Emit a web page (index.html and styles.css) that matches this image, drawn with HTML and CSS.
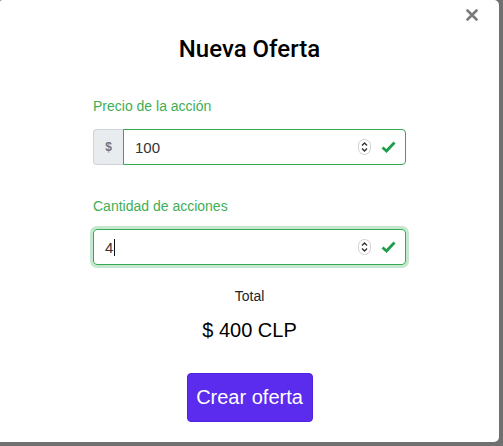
FILE: index.html
```html
<!DOCTYPE html>
<html lang="es">
<head>
  <meta charset="UTF-8">
  <title>Nueva Oferta</title>
  <link rel="stylesheet" href="styles.css">
</head>
<body>

  <div class="modal">
    <button class="close-btn" aria-label="Cerrar">
      <svg width="12" height="12" viewBox="0 0 12 12">
        <path d="M1.5 1.5 L10.5 10.5 M10.5 1.5 L1.5 10.5" stroke="#7b7b7b" stroke-width="2.6" stroke-linecap="round"/>
      </svg>
    </button>

    <h4 class="modal-title">Nueva Oferta</h4>

    <form class="offer-form">
      <div class="field">
        <label class="valid-label">Precio de la acción</label>
        <div class="input-group">
          <span class="addon">$</span>
          <div class="input-box">
            <span class="value">100</span>
            <svg class="spinner" width="13" height="16" viewBox="0 0 13 16">
              <rect x="0.5" y="0.5" width="12" height="15" rx="6" fill="#fff" stroke="#d0d0d0"/>
              <path d="M4 6.4 L6.5 3.9 L9 6.4 M4 9.6 L6.5 12.1 L9 9.6" fill="none" stroke="#333" stroke-width="1.4"/>
            </svg>
            <svg class="check" width="15" height="12" viewBox="0 0 15 12">
              <path d="M1.5 6.5 L5.5 10 L13.5 1.5" fill="none" stroke="#1e9e4a" stroke-width="2.8"/>
            </svg>
          </div>
        </div>
      </div>

      <div class="field">
        <label class="valid-label">Cantidad de acciones</label>
        <div class="input-box focused">
          <span class="value">4</span><span class="caret"></span>
          <svg class="spinner" width="13" height="16" viewBox="0 0 13 16">
            <rect x="0.5" y="0.5" width="12" height="15" rx="6" fill="#fff" stroke="#d0d0d0"/>
            <path d="M4 6.4 L6.5 3.9 L9 6.4 M4 9.6 L6.5 12.1 L9 9.6" fill="none" stroke="#333" stroke-width="1.4"/>
          </svg>
          <svg class="check" width="15" height="12" viewBox="0 0 15 12">
            <path d="M1.5 6.5 L5.5 10 L13.5 1.5" fill="none" stroke="#1e9e4a" stroke-width="2.8"/>
          </svg>
        </div>
      </div>
    </form>

    <p class="total-label">Total</p>
    <p class="total-amount">$ 400 CLP</p>

    <button class="create-btn">Crear oferta</button>
  </div>

</body>
</html>
```

FILE: styles.css
```css
body {
  margin: 0;
  background: #707070;
  font-family: "Liberation Sans", Arial, sans-serif;
  color: #212529;
}

.modal {
  position: relative;
  width: 499px;
  height: 442px;
  background: #fff;
  border-radius: 2px 5px 5px 0;
  display: flex;
  flex-direction: column;
  align-items: center;
  padding-top: 35px;
  box-sizing: border-box;
}

.close-btn {
  position: absolute;
  top: 9px;
  right: 21px;
  padding: 0;
  border: none;
  background: none;
  line-height: 0;
  cursor: pointer;
}

.modal-title {
  margin: 0;
  font-family: Roboto, "Liberation Sans", sans-serif;
  font-size: 24px;
  line-height: 29px;
  font-weight: 500;
  color: #000;
}

.offer-form {
  width: 313px;
  margin-top: 32px;
}

.field + .field {
  margin-top: 31px;
}

.valid-label {
  display: block;
  font-size: 14px;
  line-height: 21px;
  color: #3fae55;
  margin-bottom: 12px;
}

.input-group {
  display: flex;
}

.addon {
  width: 30px;
  height: 36px;
  box-sizing: border-box;
  display: flex;
  align-items: center;
  justify-content: center;
  background: #e9ecef;
  border: 1px solid #ced4da;
  border-right: none;
  border-radius: 4px 0 0 4px;
  font-size: 12px;
  font-weight: bold;
  color: #6c757d;
}

.input-box {
  flex: 1;
  height: 36px;
  box-sizing: border-box;
  display: flex;
  align-items: center;
  border: 1px solid #34a853;
  border-radius: 4px;
  padding: 0 9px 0 11px;
  font-size: 15px;
  color: #333;
}

.input-group .input-box {
  border-radius: 0 4px 4px 0;
}

.input-box.focused {
  box-shadow: 0 0 0 3px rgba(52, 168, 83, 0.28);
}

.value {
  line-height: 1;
}

.caret {
  width: 1px;
  height: 17px;
  background: #111;
  margin-left: 1px;
}

.spinner {
  margin-left: auto;
  margin-right: 10px;
}

.total-label {
  margin: 21px 0 0;
  font-size: 14px;
  line-height: 21px;
  color: #212529;
}

.total-amount {
  margin: 8px 0 0;
  font-size: 20px;
  line-height: 30px;
  color: #000;
}

.create-btn {
  margin-top: 28px;
  width: 126px;
  height: 49px;
  border: 1px solid #4f22e0;
  border-radius: 4px;
  background: #5b2bee;
  color: #fff;
  font-family: "Liberation Sans", Arial, sans-serif;
  font-size: 20px;
  cursor: pointer;
}
```
